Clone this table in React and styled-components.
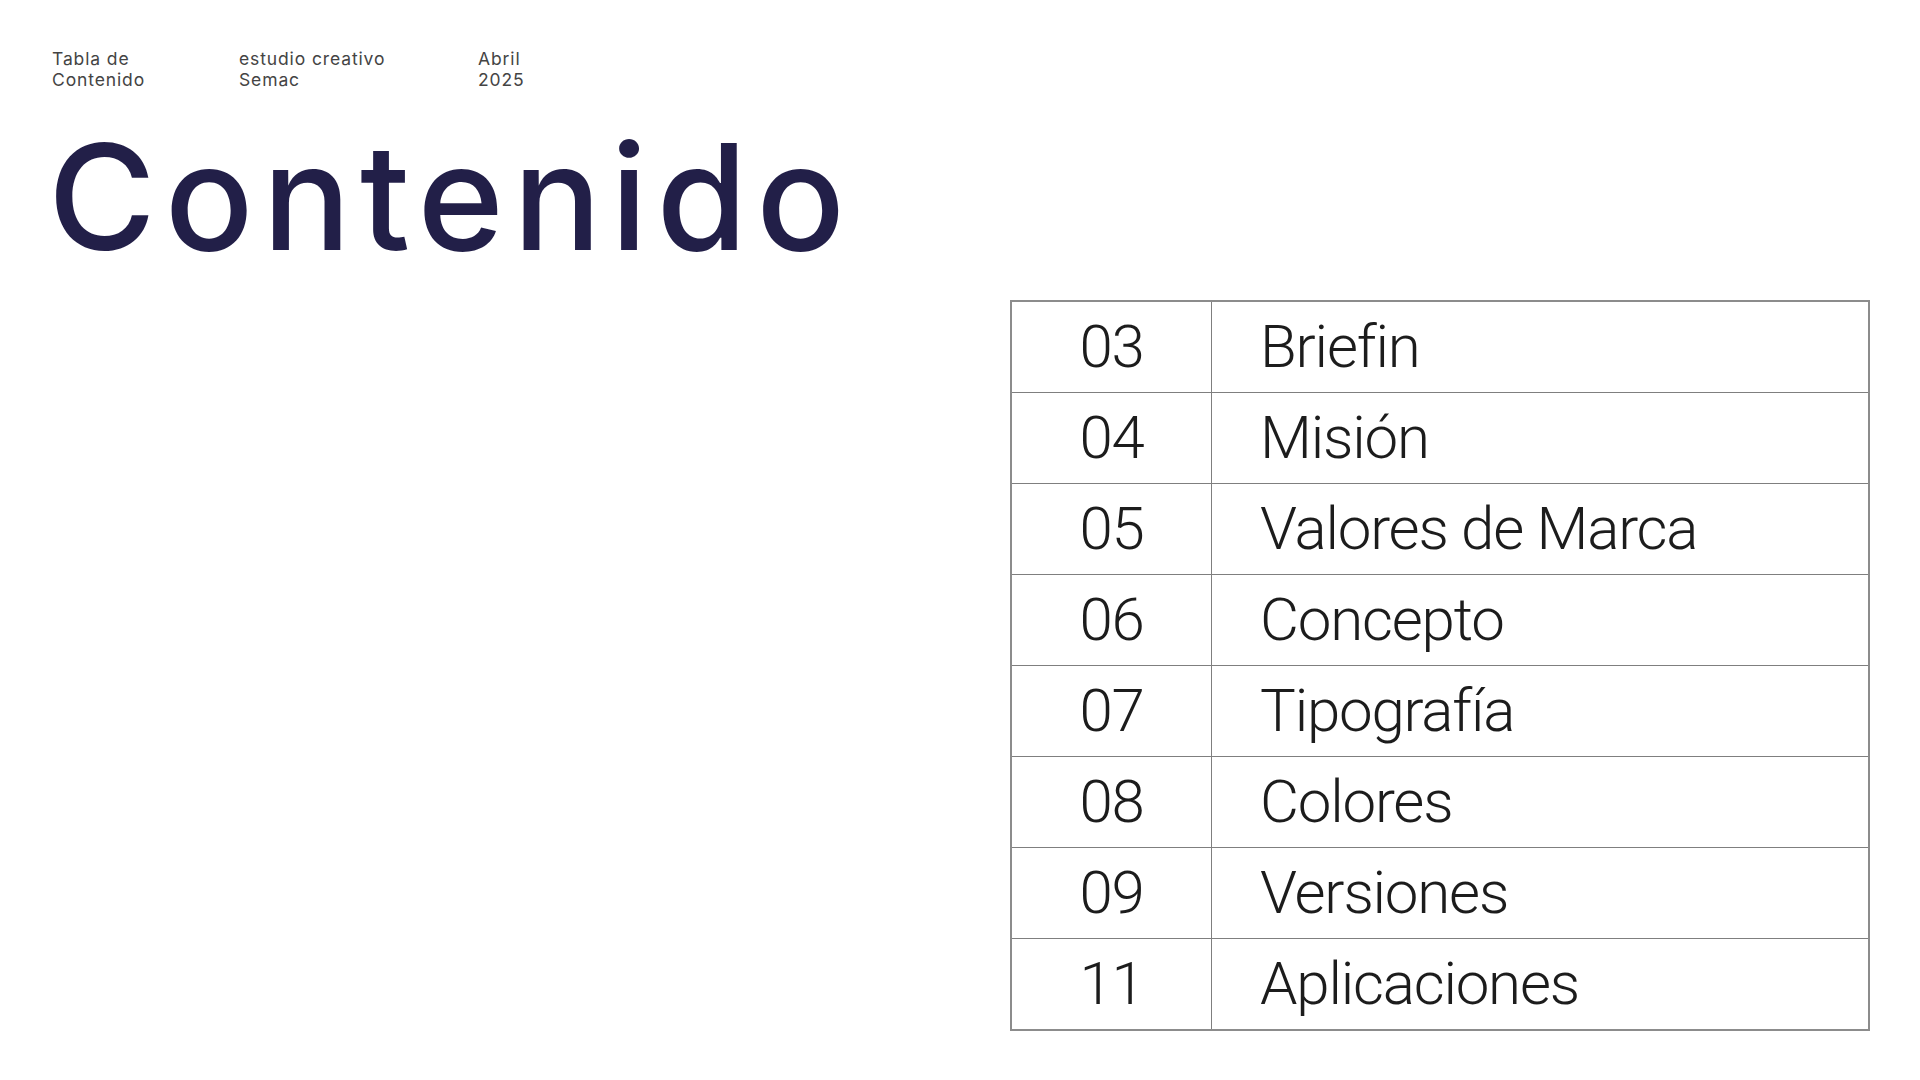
import React from "react";
import styled, { createGlobalStyle } from "styled-components";

const GlobalStyle = createGlobalStyle`
  html, body {
    margin: 0;
    padding: 0;
    background: #ffffff;
  }
  body {
    font-family: "Inter", "Liberation Sans", sans-serif;
  }
  * { box-sizing: border-box; }
`;

const Page = styled.main`
  width: 1920px;
  height: 1080px;
  padding: 48px 50px 0 52px;
  display: flex;
  flex-direction: column;
  background: #ffffff;
  overflow: hidden;
`;

const Header = styled.header`
  display: grid;
  grid-template-columns: 187px 239px auto;
  justify-content: start;
`;

const MetaText = styled.div`
  font-family: "Inter", "Liberation Sans", sans-serif;
  font-size: 17.5px;
  line-height: 21px;
  font-weight: 400;
  letter-spacing: 0.05em;
  color: #444444;
`;

const Title = styled.h1`
  margin: 33px 0 0 -4px;
  font-family: "Inter", "Liberation Sans", sans-serif;
  font-size: 147px;
  line-height: 147px;
  font-weight: 500;
  letter-spacing: 9px;
  color: #221f48;
`;

const TableWrap = styled.section`
  margin-top: 30px;
  display: flex;
  justify-content: flex-end;
`;

const Table = styled.div`
  width: 860px;
  border: 2px solid #8c8c8c;
  display: flex;
  flex-direction: column;
`;

const Row = styled.div`
  display: grid;
  grid-template-columns: 200px 1fr;
  height: ${(p) => (p.$last ? "90px" : "91px")};
  border-bottom: ${(p) => (p.$last ? "none" : "1.5px solid #7f7f7f")};
`;

const Cell = styled.div`
  display: flex;
  align-items: center;
  font-family: "Roboto", "Liberation Sans", sans-serif;
  font-weight: 300;
  font-size: 60px;
  line-height: 60px;
  color: #1c1c1c;
  letter-spacing: -0.02em;
`;

const NumCell = styled(Cell)`
  justify-content: center;
  border-right: 1.5px solid #7f7f7f;
`;

const LabelCell = styled(Cell)`
  padding-left: 48px;
`;

const items = [
  ["03", "Briefin"],
  ["04", "Misión"],
  ["05", "Valores de Marca"],
  ["06", "Concepto"],
  ["07", "Tipografía"],
  ["08", "Colores"],
  ["09", "Versiones"],
  ["11", "Aplicaciones"],
];

export default function App() {
  return (
    <>
      <GlobalStyle />
      <Page>
        <Header>
          <MetaText>
            Tabla de
            <br />
            Contenido
          </MetaText>
          <MetaText>
            estudio creativo
            <br />
            Semac
          </MetaText>
          <MetaText>
            Abril
            <br />
            2025
          </MetaText>
        </Header>
        <Title>Contenido</Title>
        <TableWrap>
          <Table>
            {items.map(([num, label], i) => (
              <Row key={num} $last={i === items.length - 1}>
                <NumCell>{num}</NumCell>
                <LabelCell>{label}</LabelCell>
              </Row>
            ))}
          </Table>
        </TableWrap>
      </Page>
    </>
  );
}
